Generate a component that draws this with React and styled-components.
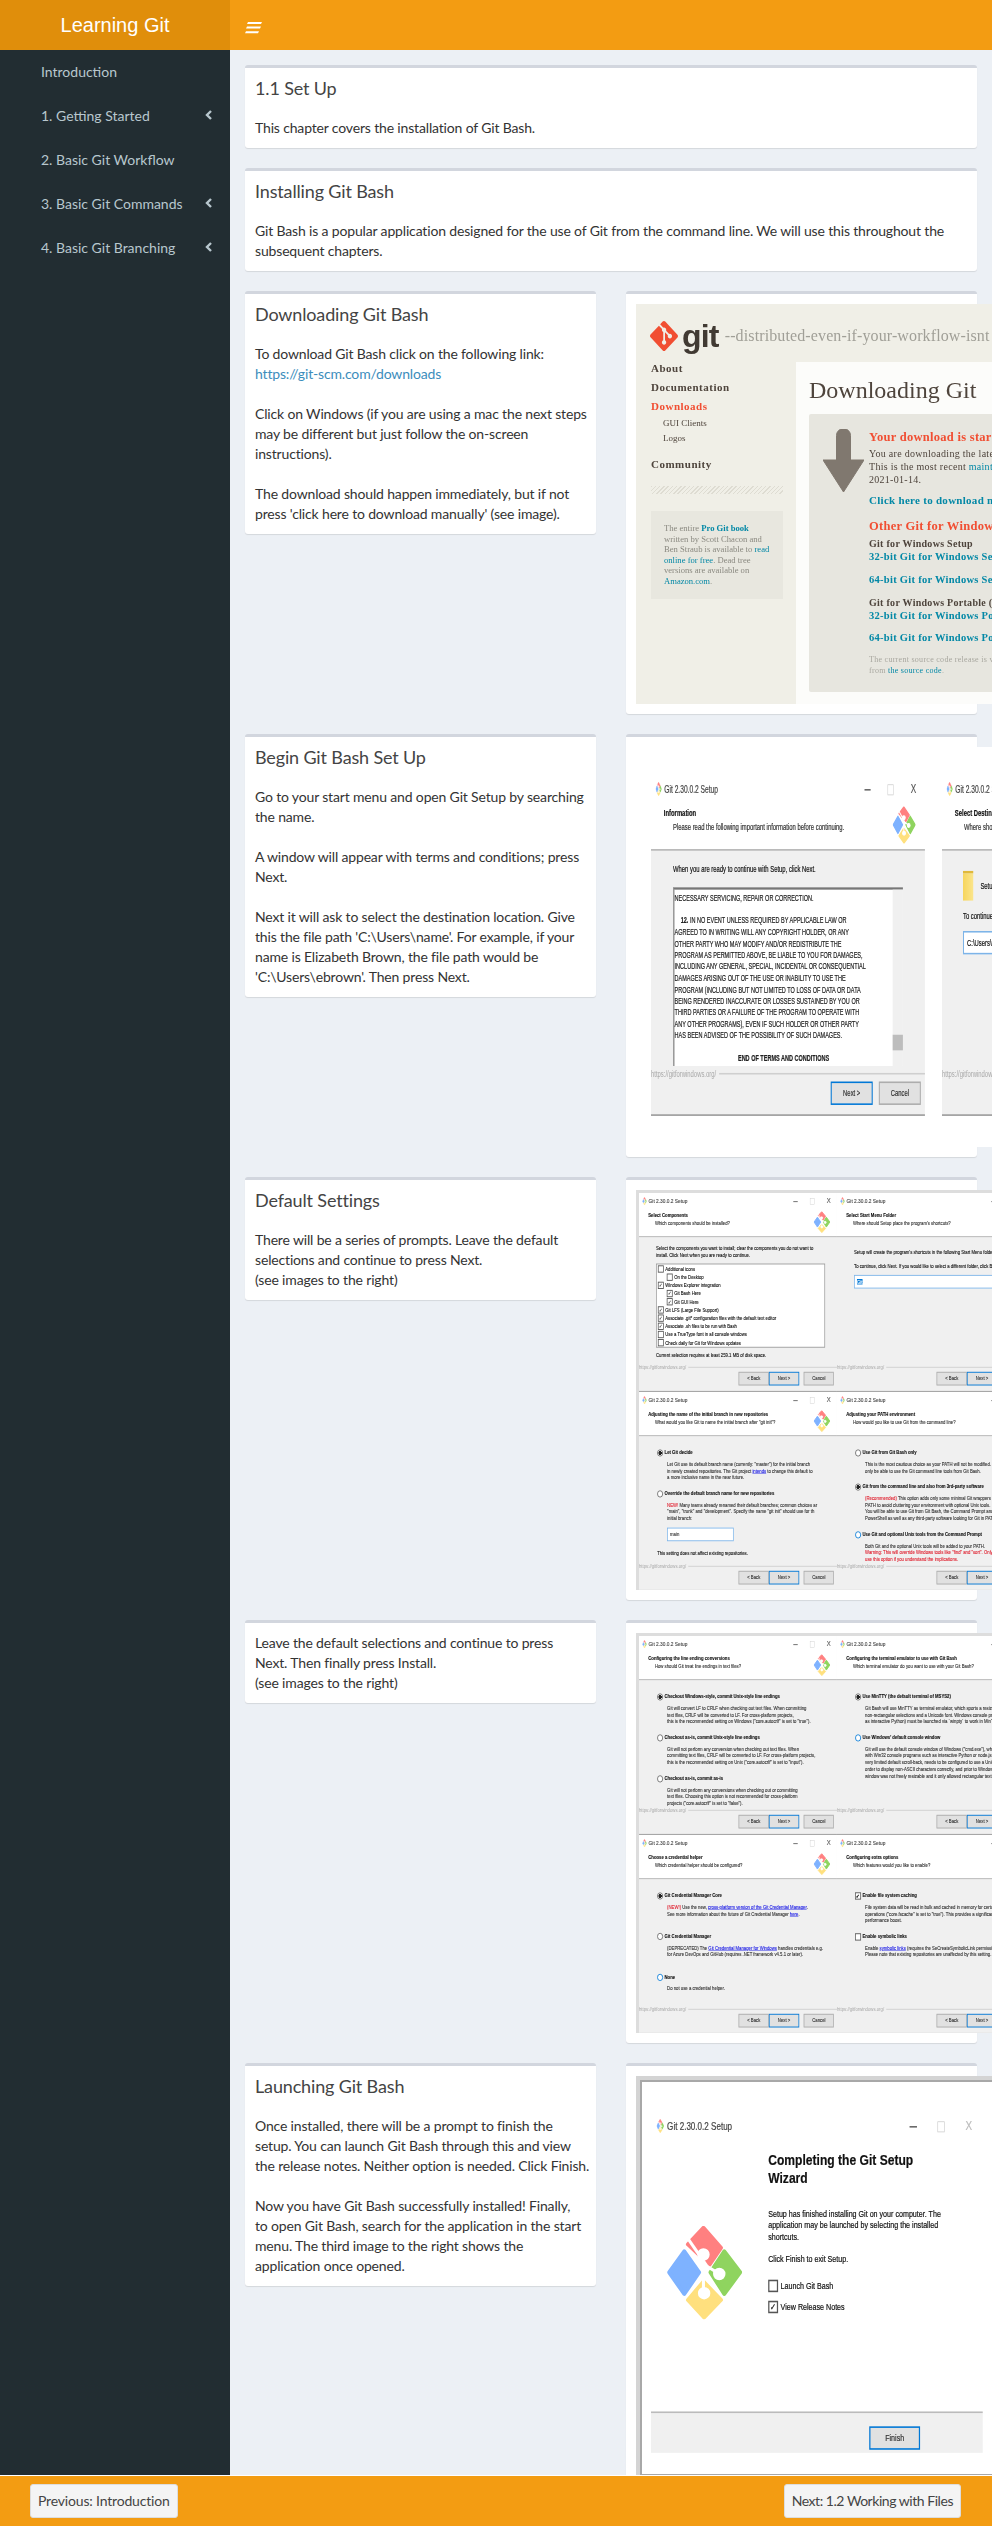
import React from 'react'
import styled, { createGlobalStyle } from 'styled-components'

// Globals
const GlobalStyle = createGlobalStyle`
  html, body, #root {
    margin: 0;
    padding: 0;
    height: 100%;
  }
  body {
    font-family: Lato, "Noto Sans", sans-serif;
    font-size: 14px;
    line-height: 20px;
    color: #333;
    background: #ecf0f5;
  }
  * {
    box-sizing: border-box;
  }
`

// Small drawings
const Hamburger = () => (
  <svg width="17" height="12" viewBox="0 0 17 12">
    <path d="M3 0h14l-1 2H2zM2 4.6h14l-1 2H1zM1 9.2h13l-1 2H0z" fill="#fff" />
  </svg>
)

const Chevron = () => (
  <svg width="7" height="10" viewBox="0 0 7 10">
    <path d="M6 1L2 5l4 4" fill="none" stroke="#b8c7ce" strokeWidth="2.4" />
  </svg>
)

const GitMark = () => (
  <svg width="28" height="30" viewBox="0 0 24 24" preserveAspectRatio="none">
    <path
      fill="#f14e32"
      d="M23.546 10.93L13.067.452c-.604-.603-1.582-.603-2.188 0L8.708 2.627l2.76 2.76c.645-.215 1.379-.07 1.889.441.516.515.658 1.258.438 1.9l2.658 2.66c.645-.223 1.387-.078 1.9.435.721.72.721 1.884 0 2.604-.719.719-1.881.719-2.6 0-.539-.541-.674-1.337-.404-1.996L12.86 8.955v6.525c.176.086.342.203.488.348.713.721.713 1.883 0 2.6-.719.721-1.889.721-2.609 0-.719-.719-.719-1.879 0-2.598.182-.18.387-.316.605-.406V8.835c-.217-.091-.424-.222-.6-.401-.545-.545-.676-1.342-.396-2.009L7.636 3.7.45 10.881c-.6.605-.6 1.584 0 2.189l10.48 10.477c.604.604 1.582.604 2.186 0l10.43-10.43c.605-.603.605-1.582 0-2.187"
    />
  </svg>
)

const BigArrow = () => (
  <svg width="41" height="63" viewBox="0 0 41 63">
    <path
      d="M13.5 6.5a7 7 0 0 1 14 0V31H41L20.5 63 0 31h13.5z"
      fill="#80786f"
      stroke="#80786f"
      strokeLinejoin="round"
    />
  </svg>
)

const GfwLogo = ({ width, height }) => (
  <svg width={width} height={height} viewBox="0 0 223 278" preserveAspectRatio="none">
    <g strokeWidth="12" strokeLinejoin="round">
      <path d="M51 76l44 62-44 64-45-64z" fill="#7eb2ff" stroke="#7eb2ff" />
      <path d="M170 76l47 62-47 64-41-64z" fill="#8fd45f" stroke="#8fd45f" />
      <path d="M108 6l52 59-34 50-64-60z" fill="#ff8080" stroke="#ff8080" />
      <path d="M108 166l52 54-50 52-48-52z" fill="#ffe07e" stroke="#ffe07e" />
    </g>
    <g stroke="#fff" strokeWidth="9" fill="#fff">
      <path d="M62 38l62 90" fill="none" />
      <path d="M118 120l40 24" fill="none" />
      <path d="M108 150v50" fill="none" />
      <circle cx="108" cy="85" r="14" />
      <circle cx="155" cy="143" r="14" />
      <circle cx="110" cy="200" r="14" />
    </g>
  </svg>
)

// Setup wizard window, drawn at its own size and shrunk the way the picture was
const WIN_W = 535
const WIN_H = 437

const WinSlot = styled.div`
  width: ${p => p.$w}px;
  height: ${p => p.$h}px;
  overflow: hidden;
  flex-shrink: 0;
`

const WinFrame = styled.div`
  width: ${WIN_W}px;
  height: ${WIN_H}px;
  display: flex;
  flex-direction: column;
  background: #fff;
  font-family: "Liberation Sans", sans-serif;
  font-size: 11.5px;
  line-height: 15px;
  color: #111;
  -webkit-text-stroke: 0.25px currentColor;
  transform-origin: top left;
  transform: scale(${p => p.$sx}, ${p => p.$sy});
`

const TitleBar = styled.div`
  height: 36px;
  flex-shrink: 0;
  display: flex;
  align-items: center;
  gap: 5px;
  padding-left: 9px;
  color: #444;
  font-size: 13px;
  white-space: nowrap;
`

const WinControls = styled.div`
  margin-left: auto;
  display: flex;
  align-items: center;
  width: 135px;
  color: ${p => (p.$dim ? '#bbb' : '#555')};
  font-size: 16px;
`

const WinControl = styled.span`
  width: 55px;
  text-align: center;
`

const MaxBox = styled.span`
  display: inline-block;
  width: 12px;
  height: 14px;
  border: 1px solid #ccc;
  vertical-align: middle;
`

const MinDash = styled.span`
  display: inline-block;
  width: 12px;
  height: 2px;
  background: #666;
  vertical-align: middle;
`

const WinHeader = styled.div`
  height: 59px;
  flex-shrink: 0;
  display: flex;
  padding: 4px 18px 0 25px;
  white-space: nowrap;
`

const HeaderText = styled.div`
  flex: 1;
`

const Heading = styled.div`
  font-weight: 700;
  line-height: 18px;
  color: #111;
`

const Sub = styled.div`
  margin-left: 18px;
  line-height: 19px;
  color: #333;
`

const WinBody = styled.div`
  flex: 1;
  min-height: 0;
  display: flex;
  flex-direction: column;
  background: #f0f0f0;
  border-top: 2px solid #b4b4b4;
  border-bottom: 2px solid #999;
`

const WinContent = styled.div`
  flex: 1;
  min-height: 0;
  padding: ${p => p.$top ?? 29}px 0 0 ${p => p.$left ?? 49}px;
  white-space: nowrap;
  overflow: hidden;
`

const UrlRow = styled.div`
  display: flex;
  align-items: center;
  gap: 6px;
  height: 16px;
  color: #a8a8a8;
  -webkit-text-stroke: 0;
  white-space: nowrap;
  &::after {
    content: '';
    flex: 1;
    height: 2px;
    background: #cfcfcf;
  }
`

const ButtonRow = styled.div`
  display: flex;
  justify-content: flex-end;
  padding: 2px 8px 10px 0;
  height: 44px;
`

const WinButton = styled.div`
  width: 82px;
  height: 30px;
  margin-left: ${p => (p.$gap ? 12 : 0)}px;
  display: flex;
  align-items: center;
  justify-content: center;
  background: #e1e1e1;
  border: 2px solid ${p => (p.$primary ? '#0078d7' : '#adadad')};
  color: #333;
`

const Radio = styled.span`
  display: inline-block;
  width: 16px;
  height: 16px;
  margin-right: 4px;
  border-radius: 50%;
  border: 2px solid ${p => (p.$focus ? '#0078d7' : '#666')};
  background: ${p => (p.$on ? 'radial-gradient(#222 0 50%, #fff 55%)' : '#fff')};
  vertical-align: middle;
  flex-shrink: 0;
`

const Tick = styled.span`
  display: inline-block;
  width: 16px;
  height: 16px;
  margin-right: 4px;
  border: 2px solid #555;
  background: #fff;
  vertical-align: middle;
  text-align: center;
  font-size: 12px;
  line-height: 12px;
  flex-shrink: 0;
`

const OptTitle = styled.div`
  height: 15px;
  margin-bottom: 10px;
  font-weight: 700;
  display: flex;
  align-items: center;
`

const OptDesc = styled.div`
  margin: 0 0 20px 27px;
  color: #333;
`

const WinLink = styled.span`
  color: #1a1ae6;
  text-decoration: underline;
`

const RedText = styled.span`
  color: #e01f2e;
`

const ListBox = styled.div`
  width: 457px;
  height: 185px;
  margin: 10px 0;
  padding: 1px 3px;
  background: #fff;
  border: 2px solid #9a9a9a;
`

const ListRow = styled.div`
  height: 18px;
  display: flex;
  align-items: center;
  padding-left: ${p => (p.$sub ? 24 : 0)}px;
`

const ListBoxSpacer = styled.div`
  height: 175px;
`

const PathInput = styled.div`
  width: ${p => p.$w}px;
  height: 30px;
  margin: 12px 0;
  padding: 6px;
  background: #fff;
  border: 2px solid #7db4e8;
`

const Highlight = styled.span`
  background: #0078d7;
  color: #fff;
`

const FolderRow = styled.div`
  display: flex;
  align-items: center;
  gap: 14px;
  margin-bottom: 12px;
`

const FolderIcon = styled.div`
  width: 20px;
  height: 38px;
  background: linear-gradient(90deg, #f6d55c, #fbe58c);
  border-top: 3px solid #e0b93c;
`

const Memo = styled.div`
  width: 449px;
  height: 229px;
  margin-top: 16px;
  display: flex;
  background: #fff;
  border-top: 3px solid #777;
  border-left: 3px solid #999;
  font-size: 10.8px;
  line-height: 14.7px;
  color: #222;
`

const MemoText = styled.div`
  flex: 1;
  padding-top: 3px;
`

const MemoLine = styled.div`
  min-height: 14.7px;
  text-align: ${p => (p.$center ? 'center' : 'left')};
  font-weight: ${p => (p.$center ? 700 : 400)};
  padding-left: ${p => (p.$indent ? 12 : 0)}px;
`

const MemoBar = styled.div`
  width: 20px;
  display: flex;
  flex-direction: column;
  background: #f0f0f0;
`

const MemoThumb = styled.div`
  height: 20px;
  margin-top: auto;
  margin-bottom: 20px;
  background: #bdbdbd;
`

const Wizard = ({ w, h, sx, sy, heading, sub, left, top, noBack, children }) => (
  <WinSlot $w={w} $h={h}>
    <WinFrame $sx={sx} $sy={sy}>
      <TitleBar>
        <GfwLogo width={12} height={18} />
        Git 2.30.0.2 Setup
        <WinControls>
          <WinControl><MinDash /></WinControl>
          <WinControl><MaxBox /></WinControl>
          <WinControl>X</WinControl>
        </WinControls>
      </TitleBar>
      <WinHeader>
        <HeaderText>
          <Heading>{heading}</Heading>
          <Sub>{sub}</Sub>
        </HeaderText>
        <GfwLogo width={45} height={48} />
      </WinHeader>
      <WinBody>
        <WinContent $left={left} $top={top}>{children}</WinContent>
        <UrlRow>https://gitforwindows.org/</UrlRow>
        <ButtonRow>
          {!noBack && <WinButton>&lt; Back</WinButton>}
          <WinButton $primary>Next &gt;</WinButton>
          <WinButton $gap>Cancel</WinButton>
        </ButtonRow>
      </WinBody>
    </WinFrame>
  </WinSlot>
)

const Option = ({ on, focus, title, children }) => (
  <>
    <OptTitle><Radio $on={on} $focus={focus} />{title}</OptTitle>
    <OptDesc>{children}</OptDesc>
  </>
)

const TickOption = ({ on, title, children }) => (
  <>
    <OptTitle><Tick>{on ? '✓' : ''}</Tick>{title}</OptTitle>
    <OptDesc>{children}</OptDesc>
  </>
)

// The download page picture
const Shot = styled.div`
  width: ${p => p.$w}px;
  height: 400px;
  flex-shrink: 0;
  overflow: hidden;
  filter: blur(0.35px);
`

const Site = styled.div`
  height: 400px;
  background: #f0efe7;
  font-family: "Liberation Serif", serif;
  color: #4e443c;
  white-space: nowrap;
`

const SiteTop = styled.div`
  height: 58px;
  padding: 5px 0 0 14px;
  display: flex;
  align-items: center;
`

const SiteGitWord = styled.span`
  margin: 0 6px 0 4px;
  font-family: "Liberation Sans", sans-serif;
  font-weight: 700;
  font-size: 32px;
  letter-spacing: -0.8px;
  line-height: 36px;
  color: #413a33;
`

const SiteTagline = styled.span`
  font-size: 16px;
  letter-spacing: 0.12px;
  color: #a09f97;
`

const SiteMain = styled.div`
  display: flex;
`

const SiteNav = styled.div`
  width: 160px;
  padding: 0 13px 0 15px;
  flex-shrink: 0;
  margin-top: -3px;
`

const SiteNavItem = styled.div`
  height: ${p => (p.$sub ? 14.5 : 19)}px;
  line-height: ${p => (p.$sub ? 14.5 : 19)}px;
  margin-top: ${p => p.$top ?? 0}px;
  padding-left: ${p => (p.$sub ? 12 : 0)}px;
  font-size: ${p => (p.$sub ? 9 : 11)}px;
  font-weight: ${p => (p.$sub ? 400 : 700)};
  letter-spacing: ${p => (p.$sub ? 0 : 0.5)}px;
  color: ${p => (p.$active ? '#f14e32' : '#4e443c')};
`

const Hatch = styled.div`
  height: 8px;
  margin-top: 12px;
  background: repeating-linear-gradient(135deg, #dedcd2 0 1px, transparent 1px 3px);
`

const SiteCallout = styled.div`
  margin-top: 17px;
  height: 88px;
  padding: 12px 13px;
  background: #e8e7df;
  font-size: 8.6px;
  line-height: 10.5px;
  color: #8a8980;
`

const Teal = styled.span`
  color: #0388a6;
  font-weight: ${p => (p.$bold ? 700 : 'inherit')};
`

const SitePanel = styled.div`
  flex: 1;
  height: 342px;
  padding: 0 0 0 13px;
  background: #fcfcfa;
`

const SiteTitle = styled.div`
  height: 52px;
  line-height: 56px;
  font-size: 24px;
  color: #4e443c;
`

const SiteWell = styled.div`
  height: 278px;
  display: flex;
  padding: 15px 0 0 14px;
  background: #e7e6df;
  border-radius: 2px;
`

const WellText = styled.div`
  padding: 0 0 0 5px;
  font-size: 10px;
  letter-spacing: 0.28px;
`

const WellLine = styled.div`
  height: ${p => p.$h ?? 13}px;
  line-height: ${p => p.$h ?? 13}px;
  margin-top: ${p => p.$top ?? 0}px;
  font-size: ${p => p.$size ?? 10}px;
  font-weight: ${p => (p.$bold ? 700 : 400)};
  color: ${p => p.$color ?? '#4e443c'};
`

// Picture frames
const ShotRow = styled.div`
  height: 400px;
  padding: 28px 0 0 15px;
  display: flex;
  gap: 17px;
  background: #fff;
`

const ShotGrid = styled.div`
  height: 400px;
  padding: 3px 0 0 3px;
  display: grid;
  grid-template-columns: 198px 198px;
  grid-template-rows: 199px 199px;
  background: #ddd;
`

const FinishOuter = styled.div`
  height: 400px;
  padding: 4px;
  background: #d4d4d4;
`

const FinishInner = styled.div`
  height: 396px;
  padding: 30px 0 0 9px;
  background: #fff;
  border: 2px solid #a8a8a8;
`

const FinishMain = styled.div`
  flex: 1;
  min-height: 0;
  display: flex;
  white-space: nowrap;
`

const FinishLeft = styled.div`
  width: 189px;
  padding: 110px 0 0 26px;
  flex-shrink: 0;
`

const FinishHeading = styled.div`
  font-size: 19.5px;
  font-weight: 700;
  line-height: 23px;
  color: #111;
  margin: 14px 0 27px;
`

const FinishLine = styled.div`
  line-height: 15px;
  margin-bottom: ${p => p.$gap ?? 0}px;
  display: flex;
  align-items: center;
`

const FinishFoot = styled.div`
  height: 53px;
  flex-shrink: 0;
  padding: 17px 0 0 352px;
  background: #f0f0f0;
  border-top: 2px solid #bbb;
`

// Page frame
const Wrapper = styled.div`
  height: 100vh;
  display: flex;
  flex-direction: column;
  overflow: hidden;
`

const TopBar = styled.header`
  height: 50px;
  flex-shrink: 0;
  display: flex;
  background: #f39c12;
`

const Logo = styled.div`
  width: 230px;
  background: #e08e0b;
  color: #fff;
  font-family: "Liberation Sans", sans-serif;
  font-size: 20px;
  line-height: 50px;
  text-align: center;
`

const Toggle = styled.div`
  padding: 19px 0 0 15px;
`

const Middle = styled.div`
  flex: 1;
  min-height: 0;
  display: flex;
`

const SideBar = styled.nav`
  width: 230px;
  flex-shrink: 0;
  background: #222d32;
  color: #b8c7ce;
`

const SideItem = styled.div`
  height: 44px;
  padding-left: 41px;
  padding-right: 18px;
  display: flex;
  align-items: center;
  justify-content: space-between;
  svg {
    margin-top: -3px;
  }
`

const Content = styled.main`
  flex: 1;
  min-width: 0;
  padding: 15px 0 0 15px;
  overflow: hidden;
`

const Box = styled.section`
  background: #fff;
  border-top: 3px solid #d2d6de;
  border-radius: 3px;
  box-shadow: 0 1px 1px rgba(0, 0, 0, 0.1);
  margin-bottom: 20px;
  width: ${p => (p.$full ? '732px' : '351px')};
`

const BoxHeader = styled.div`
  padding: 10px;
`

const BoxTitle = styled.h3`
  margin: 0;
  font-size: 18px;
  font-weight: 400;
  line-height: 20px;
  letter-spacing: -0.15px;
  color: #444;
`

const BoxBody = styled.div`
  padding: 10px 6px 10px 10px;
  letter-spacing: -0.16px;
  p {
    margin: 0 0 20px;
  }
  p:last-child {
    margin: 0;
  }
  a {
    color: #3c8dbc;
    text-decoration: none;
  }
`

const ImageBody = styled.div`
  padding: 10px;
`

const Row = styled.div`
  display: flex;
  align-items: flex-start;
  gap: 30px;
`

const BottomBar = styled.footer`
  height: 51px;
  flex-shrink: 0;
  display: flex;
  justify-content: space-between;
  padding: 8px 31px 0 30px;
  background: #f39c12;
  border-top: 1px solid #fff;
`

const NavButton = styled.div`
  height: 34px;
  padding: 6px 7px;
  background: #f4f4f4;
  border: 1px solid #ddd;
  border-radius: 3px;
  letter-spacing: ${p => p.$spacing}px;
  color: #444;
`

const menu = [
  { label: 'Introduction' },
  { label: '1. Getting Started', more: true },
  { label: '2. Basic Git Workflow' },
  { label: '3. Basic Git Commands', more: true },
  { label: '4. Basic Git Branching', more: true },
]

const TextBox = ({ title, children }) => (
  <Box>
    {title && (
      <BoxHeader>
        <BoxTitle>{title}</BoxTitle>
      </BoxHeader>
    )}
    <BoxBody>{children}</BoxBody>
  </Box>
)

const ImageBox = ({ children }) => (
  <Box>
    <ImageBody>{children}</ImageBody>
  </Box>
)

const small = { w: 198, h: 199, sx: 0.37, sy: 0.455 }

const SitePicture = () => (
  <Site>
    <SiteTop>
      <GitMark />
      <SiteGitWord>git</SiteGitWord>
      <SiteTagline>--distributed-even-if-your-workflow-isnt</SiteTagline>
    </SiteTop>
    <SiteMain>
      <SiteNav>
        <SiteNavItem>About</SiteNavItem>
        <SiteNavItem>Documentation</SiteNavItem>
        <SiteNavItem $active>Downloads</SiteNavItem>
        <SiteNavItem $sub>GUI Clients</SiteNavItem>
        <SiteNavItem $sub>Logos</SiteNavItem>
        <SiteNavItem $top={10}>Community</SiteNavItem>
        <Hatch />
        <SiteCallout>
          The entire <Teal $bold>Pro Git book</Teal><br />
          written by Scott Chacon and<br />
          Ben Straub is available to <Teal>read</Teal><br />
          <Teal>online for free</Teal>. Dead tree<br />
          versions are available on<br />
          <Teal>Amazon.com</Teal>.
        </SiteCallout>
      </SiteNav>
      <SitePanel>
        <SiteTitle>Downloading Git</SiteTitle>
        <SiteWell>
          <BigArrow />
          <WellText>
            <WellLine $size={12.5} $bold $color="#f14e32" $h={16}>Your download is starting...</WellLine>
            <WellLine $top={2}>You are downloading the latest (2.30.0.2) 64-bit version of Git for Windows.</WellLine>
            <WellLine>This is the most recent <Teal>maintained build</Teal>. It was released 2 months ago, on</WellLine>
            <WellLine>2021-01-14.</WellLine>
            <WellLine $top={7} $size={11} $bold $color="#0388a6" $h={15}>Click here to download manually.</WellLine>
            <WellLine $top={10} $size={12.5} $bold $color="#f14e32" $h={16}>Other Git for Windows downloads</WellLine>
            <WellLine $top={3} $bold>Git for Windows Setup</WellLine>
            <WellLine $size={10.5} $bold $color="#0388a6">32-bit Git for Windows Setup.</WellLine>
            <WellLine $top={10} $size={10.5} $bold $color="#0388a6">64-bit Git for Windows Setup.</WellLine>
            <WellLine $top={10} $bold>Git for Windows Portable ("thumbdrive edition")</WellLine>
            <WellLine $size={10.5} $bold $color="#0388a6">32-bit Git for Windows Portable.</WellLine>
            <WellLine $top={9} $size={10.5} $bold $color="#0388a6">64-bit Git for Windows Portable.</WellLine>
            <WellLine $top={10} $size={8} $h={11} $color="#a8a79f">The current source code release is version 2.30.2.</WellLine>
            <WellLine $size={8} $h={11} $color="#a8a79f">from <Teal>the source code</Teal>.</WellLine>
          </WellText>
        </SiteWell>
      </SitePanel>
    </SiteMain>
  </Site>
)

const SetupPicture = () => (
  <ShotRow>
    <Wizard
      w={274} h={341} sx={0.512} sy={0.78} noBack
      heading="Information"
      sub="Please read the following important information before continuing."
      left={43} top={16}
    >
      When you are ready to continue with Setup, click Next.
      <Memo>
        <MemoText>
          <MemoLine>NECESSARY SERVICING, REPAIR OR CORRECTION.</MemoLine>
          <MemoLine />
          <MemoLine $indent><b>12.</b> IN NO EVENT UNLESS REQUIRED BY APPLICABLE LAW OR</MemoLine>
          <MemoLine>AGREED TO IN WRITING WILL ANY COPYRIGHT HOLDER, OR ANY</MemoLine>
          <MemoLine>OTHER PARTY WHO MAY MODIFY AND/OR REDISTRIBUTE THE</MemoLine>
          <MemoLine>PROGRAM AS PERMITTED ABOVE, BE LIABLE TO YOU FOR DAMAGES,</MemoLine>
          <MemoLine>INCLUDING ANY GENERAL, SPECIAL, INCIDENTAL OR CONSEQUENTIAL</MemoLine>
          <MemoLine>DAMAGES ARISING OUT OF THE USE OR INABILITY TO USE THE</MemoLine>
          <MemoLine>PROGRAM (INCLUDING BUT NOT LIMITED TO LOSS OF DATA OR DATA</MemoLine>
          <MemoLine>BEING RENDERED INACCURATE OR LOSSES SUSTAINED BY YOU OR</MemoLine>
          <MemoLine>THIRD PARTIES OR A FAILURE OF THE PROGRAM TO OPERATE WITH</MemoLine>
          <MemoLine>ANY OTHER PROGRAMS), EVEN IF SUCH HOLDER OR OTHER PARTY</MemoLine>
          <MemoLine>HAS BEEN ADVISED OF THE POSSIBILITY OF SUCH DAMAGES.</MemoLine>
          <MemoLine />
          <MemoLine $center>END OF TERMS AND CONDITIONS</MemoLine>
        </MemoText>
        <MemoBar><MemoThumb /></MemoBar>
      </Memo>
    </Wizard>
    <Wizard
      w={274} h={341} sx={0.512} sy={0.78} noBack
      heading="Select Destination Location"
      sub="Where should Git be installed?"
      left={41} top={26}
    >
      <FolderRow>
        <FolderIcon />
        Setup will install Git into the following folder.
      </FolderRow>
      To continue, click Next. If you would like to select a different folder, click Browse.
      <PathInput $w={440}>C:\Users\name</PathInput>
      <ListBoxSpacer />
      At least 259.1 MB of free disk space is required.
    </Wizard>
  </ShotRow>
)

const components = [
  ['Additional icons', false, false],
  ['On the Desktop', false, true],
  ['Windows Explorer integration', true, false],
  ['Git Bash Here', true, true],
  ['Git GUI Here', true, true],
  ['Git LFS (Large File Support)', true, false],
  ['Associate .git* configuration files with the default text editor', true, false],
  ['Associate .sh files to be run with Bash', true, false],
  ['Use a TrueType font in all console windows', false, false],
  ['Check daily for Git for Windows updates', false, false],
]

const DefaultsPicture = () => (
  <ShotGrid>
    <Wizard {...small} heading="Select Components" sub="Which components should be installed?" left={46} top={18}>
      Select the components you want to install; clear the components you do not want to<br />
      install. Click Next when you are ready to continue.
      <ListBox>
        {components.map(([label, on, sub]) => (
          <ListRow key={label} $sub={sub}><Tick>{on ? '✓' : ''}</Tick>{label}</ListRow>
        ))}
      </ListBox>
      Current selection requires at least 259.1 MB of disk space.
    </Wizard>
    <Wizard {...small} heading="Select Start Menu Folder" sub="Where should Setup place the program's shortcuts?" left={46} top={26}>
      Setup will create the program's shortcuts in the following Start Menu folder.
      <MemoLine />
      To continue, click Next. If you would like to select a different folder, click Browse.
      <PathInput $w={440}><Highlight>Git</Highlight></PathInput>
      <ListBoxSpacer />
      <ListRow><Tick />Don't create a Start Menu folder</ListRow>
    </Wizard>
    <Wizard {...small} heading="Adjusting the name of the initial branch in new repositories" sub={'What would you like Git to name the initial branch after "git init"?'}>
      <Option on title="Let Git decide">
        Let Git use its default branch name (currently: "master") for the initial branch<br />
        in newly created repositories. The Git project <WinLink>intends</WinLink> to change this default to<br />
        a more inclusive name in the near future.
      </Option>
      <Option title="Override the default branch name for new repositories">
        <RedText>NEW!</RedText> Many teams already renamed their default branches; common choices ar<br />
        "main", "trunk" and "development". Specify the name "git init" should use for th<br />
        initial branch:
        <PathInput $w={180}>main</PathInput>
      </Option>
      This setting does not affect existing repositories.
    </Wizard>
    <Wizard {...small} heading="Adjusting your PATH environment" sub="How would you like to use Git from the command line?">
      <Option title="Use Git from Git Bash only">
        This is the most cautious choice as your PATH will not be modified. You will<br />
        only be able to use the Git command line tools from Git Bash.
      </Option>
      <Option on title="Git from the command line and also from 3rd-party software">
        <RedText>(Recommended)</RedText> This option adds only some minimal Git wrappers to your<br />
        PATH to avoid cluttering your environment with optional Unix tools.<br />
        You will be able to use Git from Git Bash, the Command Prompt and the Windows<br />
        PowerShell as well as any third-party software looking for Git in PATH.
      </Option>
      <Option focus title="Use Git and optional Unix tools from the Command Prompt">
        Both Git and the optional Unix tools will be added to your PATH.<br />
        <RedText>Warning: This will override Windows tools like "find" and "sort". Only<br />
        use this option if you understand the implications.</RedText>
      </Option>
    </Wizard>
  </ShotGrid>
)

const InstallPicture = () => (
  <ShotGrid>
    <Wizard {...small} heading="Configuring the line ending conversions" sub="How should Git treat line endings in text files?">
      <Option on title="Checkout Windows-style, commit Unix-style line endings">
        Git will convert LF to CRLF when checking out text files. When committing<br />
        text files, CRLF will be converted to LF. For cross-platform projects,<br />
        this is the recommended setting on Windows ("core.autocrlf" is set to "true").
      </Option>
      <Option title="Checkout as-is, commit Unix-style line endings">
        Git will not perform any conversion when checking out text files. When<br />
        committing text files, CRLF will be converted to LF. For cross-platform projects,<br />
        this is the recommended setting on Unix ("core.autocrlf" is set to "input").
      </Option>
      <Option title="Checkout as-is, commit as-is">
        Git will not perform any conversions when checking out or committing<br />
        text files. Choosing this option is not recommended for cross-platform<br />
        projects ("core.autocrlf" is set to "false").
      </Option>
    </Wizard>
    <Wizard {...small} heading="Configuring the terminal emulator to use with Git Bash" sub="Which terminal emulator do you want to use with your Git Bash?">
      <Option on title="Use MinTTY (the default terminal of MSYS2)">
        Git Bash will use MinTTY as terminal emulator, which sports a resizable window,<br />
        non-rectangular selections and a Unicode font. Windows console programs (such<br />
        as interactive Python) must be launched via `winpty` to work in MinTTY.
      </Option>
      <Option focus title="Use Windows' default console window">
        Git will use the default console window of Windows ("cmd.exe"), which works well<br />
        with Win32 console programs such as interactive Python or node.js, but has a<br />
        very limited default scroll-back, needs to be configured to use a Unicode font in<br />
        order to display non-ASCII characters correctly, and prior to Windows 10 its<br />
        window was not freely resizable and it only allowed rectangular text selections.
      </Option>
    </Wizard>
    <Wizard {...small} heading="Choose a credential helper" sub="Which credential helper should be configured?">
      <Option on title="Git Credential Manager Core">
        <RedText>(NEW!)</RedText> Use the new, <WinLink>cross-platform version of the Git Credential Manager</WinLink>.<br />
        See more information about the future of Git Credential Manager <WinLink>here</WinLink>.
      </Option>
      <MemoLine />
      <Option title="Git Credential Manager">
        (DEPRECATED) The <WinLink>Git Credential Manager for Windows</WinLink> handles credentials e.g.<br />
        for Azure DevOps and GitHub (requires .NET framework v4.5.1 or later).
      </Option>
      <MemoLine />
      <Option focus title="None">
        Do not use a credential helper.
      </Option>
    </Wizard>
    <Wizard {...small} heading="Configuring extra options" sub="Which features would you like to enable?">
      <TickOption on title="Enable file system caching">
        File system data will be read in bulk and cached in memory for certain<br />
        operations ("core.fscache" is set to "true"). This provides a significant<br />
        performance boost.
      </TickOption>
      <TickOption title="Enable symbolic links">
        Enable <WinLink>symbolic links</WinLink> (requires the SeCreateSymbolicLink permission).<br />
        Please note that existing repositories are unaffected by this setting.
      </TickOption>
    </Wizard>
  </ShotGrid>
)

const FinishPicture = () => (
  <FinishOuter>
    <FinishInner>
      <WinSlot $w={340} $h={344}>
        <WinFrame $sx={0.62} $sy={0.78}>
          <TitleBar>
            <GfwLogo width={12} height={18} />
            Git 2.30.0.2 Setup
            <WinControls $dim>
              <WinControl><MinDash /></WinControl>
              <WinControl><MaxBox /></WinControl>
              <WinControl>X</WinControl>
            </WinControls>
          </TitleBar>
          <FinishMain>
            <FinishLeft>
              <GfwLogo width={121} height={120} />
            </FinishLeft>
            <div>
              <FinishHeading>
                Completing the Git Setup<br />
                Wizard
              </FinishHeading>
              <FinishLine>Setup has finished installing Git on your computer. The</FinishLine>
              <FinishLine>application may be launched by selecting the installed</FinishLine>
              <FinishLine $gap={13}>shortcuts.</FinishLine>
              <FinishLine $gap={19}>Click Finish to exit Setup.</FinishLine>
              <FinishLine $gap={11}><Tick />Launch Git Bash</FinishLine>
              <FinishLine><Tick>✓</Tick>View Release Notes</FinishLine>
            </div>
          </FinishMain>
          <FinishFoot>
            <WinButton $primary>Finish</WinButton>
          </FinishFoot>
        </WinFrame>
      </WinSlot>
    </FinishInner>
  </FinishOuter>
)

export default function App() {
  return (
    <Wrapper>
      <GlobalStyle />
      <TopBar>
        <Logo>Learning Git</Logo>
        <Toggle><Hamburger /></Toggle>
      </TopBar>

      <Middle>
        <SideBar>
          {menu.map(item => (
            <SideItem key={item.label}>
              {item.label}
              {item.more && <Chevron />}
            </SideItem>
          ))}
        </SideBar>

        <Content>
          <Box $full>
            <BoxHeader><BoxTitle>1.1 Set Up</BoxTitle></BoxHeader>
            <BoxBody><p>This chapter covers the installation of Git Bash.</p></BoxBody>
          </Box>
          <Box $full>
            <BoxHeader><BoxTitle>Installing Git Bash</BoxTitle></BoxHeader>
            <BoxBody>
              <p>Git Bash is a popular application designed for the use of Git from the command line. We will use this throughout the subsequent chapters.</p>
            </BoxBody>
          </Box>

          <Row>
            <TextBox title="Downloading Git Bash">
              <p>To download Git Bash click on the following link:<br /><a href="#git">https://git-scm.com/downloads</a></p>
              <p>Click on Windows (if you are using a mac the next steps may be different but just follow the on-screen instructions).</p>
              <p>The download should happen immediately, but if not press 'click here to download manually' (see image).</p>
            </TextBox>
            <ImageBox><Shot $w={500}><SitePicture /></Shot></ImageBox>
          </Row>

          <Row>
            <TextBox title="Begin Git Bash Set Up">
              <p>Go to your start menu and open Git Setup by searching the name.</p>
              <p>A window will appear with terms and conditions; press Next.</p>
              <p>Next it will ask to select the destination location. Give this the file path 'C:\Users\name'. For example, if your name is Elizabeth Brown, the file path would be 'C:\Users\ebrown'. Then press Next.</p>
            </TextBox>
            <ImageBox><Shot $w={500}><SetupPicture /></Shot></ImageBox>
          </Row>

          <Row>
            <TextBox title="Default Settings">
              <p>There will be a series of prompts. Leave the default selections and continue to press Next.<br />(see images to the right)</p>
            </TextBox>
            <ImageBox><Shot $w={400}><DefaultsPicture /></Shot></ImageBox>
          </Row>

          <Row>
            <TextBox>
              <p>Leave the default selections and continue to press<br />Next. Then finally press Install.<br />(see images to the right)</p>
            </TextBox>
            <ImageBox><Shot $w={400}><InstallPicture /></Shot></ImageBox>
          </Row>

          <Row>
            <TextBox title="Launching Git Bash">
              <p>Once installed, there will be a prompt to finish the setup. You can launch Git Bash through this and view the release notes. Neither option is needed. Click Finish.</p>
              <p>Now you have Git Bash successfully installed! Finally,<br />to open Git Bash, search for the application in the start menu. The third image to the right shows the application once opened.</p>
            </TextBox>
            <ImageBox><Shot $w={400}><FinishPicture /></Shot></ImageBox>
          </Row>
        </Content>
      </Middle>

      <BottomBar>
        <NavButton $spacing={-0.18}>Previous: Introduction</NavButton>
        <NavButton $spacing={-0.46}>Next: 1.2 Working with Files</NavButton>
      </BottomBar>
    </Wrapper>
  )
}
